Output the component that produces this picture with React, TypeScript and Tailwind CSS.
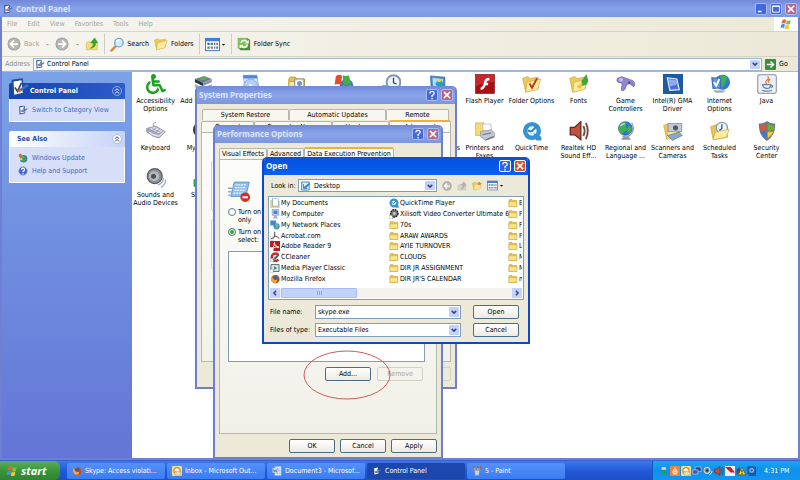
import type { ReactNode } from "react";
import clsx from "clsx";
import { FaWheelchair, FaCaretDown } from "react-icons/fa";

type IconProps = { className?: string };
type DrawnProps = IconProps & { children: ReactNode };

const Svg = ({ className = "size-[20px]", children }: DrawnProps) => (
  <svg viewBox="0 0 32 32" className={clsx("shrink-0", className)} aria-hidden="true">{children}</svg>
);

/* ---------- small icons ---------- */

const PanelIcon = ({ className }: IconProps) => (
  <Svg className={className}>
    <path d="M4 4l17-2 2 24-18 4z" fill="#1c4c9c" />
    <path d="M7 7l12-2 2 19-13 3z" fill="#fff" />
    <path d="M9 16l4 6 6-13" fill="none" stroke="#33415f" strokeWidth="2.5" />
    <path d="M16 21l13-9" stroke="#3b6fc4" strokeWidth="4" />
    <path d="M14 22l4-3" stroke="#e0603a" strokeWidth="4" />
  </Svg>
);

const Flag = ({ className }: IconProps) => (
  <Svg className={className}>
    <path d="M7 5q5-4 9 0l-2 10q-5-3-10 0z" fill="#f0602c" />
    <path d="M18 6q5 3 11-1l-3 11q-5 3-10 0z" fill="#7fc043" />
    <path d="M4 17q5-3 9 0l-2 10q-5-4-10 0z" fill="#4d8af0" />
    <path d="M15 18q5 3 10 0l-2 10q-5 3-10 0z" fill="#fbc52c" />
  </Svg>
);

const Folder = ({ className, children }: IconProps & { children?: ReactNode }) => (
  <Svg className={className}>
    <path d="M3 8l2-3h8l3 3h12v19H3z" fill="#e9c24c" stroke="#b8902c" strokeWidth="1.5" />
    <path d="M3 12h25v15H3z" fill="#fbe48a" stroke="#c9a23a" strokeWidth="1.5" />
    {children}
  </Svg>
);

const OpenFolder = ({ className, children }: IconProps & { children?: ReactNode }) => (
  <Svg className={className}>
    <path d="M1 7l8-3 4 3 13-2v18L6 29z" fill="#edc959" stroke="#c29c37" />
    <path d="M8 13l22-5-5 17L6 29z" fill="#fdeb9b" stroke="#c9a544" />
    {children}
  </Svg>
);

const Circle = ({ back, className }: IconProps & { back?: boolean }) => (
  <Svg className={className}>
    <circle cx="16" cy="16" r="15" fill="#a6a6a2" />
    <circle cx="16" cy="16" r="12" fill="#b9b9b5" />
    <path d={back ? "M25 16H9M16 8l-8 8 8 8" : "M7 16h16M16 8l8 8-8 8"} fill="none" stroke="#fff" strokeWidth="4" />
  </Svg>
);

const UpFolder = ({ className, dim }: IconProps & { dim?: boolean }) => (
  <Svg className={className}>
    <path d="M3 13l8-3 3 3h14v16H3z" fill={dim ? "#d8d6cc" : "#f6dc73"} stroke={dim ? "#aaa" : "#c9a23a"} />
    <path d="M12 26q8-3 7-13h-6l9-11 7 11h-5q1 11-12 13z" fill={dim ? "#b4b4ae" : "#2fa82c"} stroke={dim ? "#999" : "#187a18"} />
  </Svg>
);

const Magnifier = ({ className }: IconProps) => (
  <Svg className={className}>
    <path d="M3 29l10-10" stroke="#d08c4a" strokeWidth="5" strokeLinecap="round" />
    <circle cx="19" cy="12" r="9" fill="#d6edfc" stroke="#7aa6dc" strokeWidth="3" />
    <path d="M14 10q2-5 7-4" stroke="#fff" strokeWidth="3" fill="none" />
  </Svg>
);

const ViewsIcon = ({ className }: IconProps) => (
  <Svg className={className}>
    <rect x="1" y="3" width="30" height="26" fill="#fff" stroke="#3a70c8" strokeWidth="2" />
    <path d="M1 3h30v6H1z" fill="#3f7de0" />
    <path d="M5 12h5v5H5zM19 12h3v5h-3z" fill="#3d64c0" />
    <path d="M12 12h5v5h-5zM5 20h5v5H5z" fill="#3f9460" />
    <path d="M24 12h4v5h-4zM12 20h5v5h-5z" fill="#d8674f" />
    <path d="M19 20h3v5h-3zM24 20h4v5h-4z" fill="#4577cf" />
  </Svg>
);

const SyncIcon = ({ className }: IconProps) => (
  <Svg className={className}>
    <path d="M2 2h22l6 5v23H8l-6-5z" fill="#4c8f38" />
    <path d="M2 2h22v23H2z" fill="#86bd5e" />
    <path d="M9 13a8 8 0 0 1 14-2M24 17a8 8 0 0 1-14 4" fill="none" stroke="#f2faea" strokeWidth="4" />
    <path d="M27 6v9h-9zM6 27v-9h9z" fill="#f2faea" />
  </Svg>
);

const Globe = ({ className }: IconProps) => (
  <Svg className={className}>
    <path d="M8 30h16l-4-5h-8z" fill="#8d93aa" />
    <path d="M25 3q7 11-3 20-6 4-12 1" fill="none" stroke="#9a9fb8" strokeWidth="2" />
    <circle cx="15" cy="12" r="11" fill="#2876d8" stroke="#27549c" />
    <path d="M8 4q6-4 9 0l-2 5 3 4-6 5-2 4q-6-4-6-10zM20 7l5 3q1 6-5 11l-3-6z" fill="#42b04c" />
    <path d="M7 8q3-4 7-4" stroke="#d6f0ff" strokeWidth="2" fill="none" />
  </Svg>
);

const UpdateIcon = ({ className }: IconProps) => (
  <Svg className={className}>
    <circle cx="18" cy="18" r="12" fill="#3772cc" />
    <path d="M12 10l12 2 4 9-8 8-8-4z" fill="#3da44a" />
    <path d="M2 4l8-2 3 8-9 3z" fill="#e85d2c" />
    <path d="M12 8l8 1-1 7-8-1z" fill="#5cb742" />
    <path d="M5 15l8 1 2 8-8-2z" fill="#f5c937" />
  </Svg>
);

const HelpIcon = ({ className }: IconProps) => (
  <Svg className={className}>
    <circle cx="16" cy="16" r="14" fill="#3f66c4" stroke="#a9bce8" strokeWidth="3" />
    <path d="M11 12q0-5 5-5t5 5q0 3-5 5v3M16 23v4" fill="none" stroke="#fff" strokeWidth="4" />
  </Svg>
);

/* ---------- control panel icons ---------- */

const Accessibility = () => <FaWheelchair className="size-[20px] text-[#1fa01f]" />;

const Hardware = () => (
  <Svg>
    <path d="M3 8l15-5 12 5-14 6z" fill="#6e7b8c" />
    <path d="M3 8l13 6v5L3 13z" fill="#2c3547" />
    <path d="M16 14l14-6v5l-14 6z" fill="#8b95a3" />
    <path d="M9 7l9-3 6 3-8 3z" fill="#53b452" />
    <path d="M3 16l13 6 14-6v5l-14 6-13-6z" fill="#a7aebb" />
  </Svg>
);

const Programs = () => (
  <Svg>
    <path d="M5 2h22l3 20H8z" fill="#dcebfb" stroke="#5a8fd6" />
    <path d="M5 2h22l1 5H6z" fill="#4a86dd" />
    <circle cx="17" cy="19" r="11" fill="#b7cff4" stroke="#6f93cb" />
    <circle cx="17" cy="19" r="3" fill="#fff" />
  </Svg>
);

const AdminTools = () => (
  <Folder className="size-[20px]">
    <path d="M12 8h15v14H12z" fill="#d7dff0" stroke="#657597" />
    <circle cx="20" cy="15" r="5" fill="#7b93c5" stroke="#fff" strokeWidth="2" />
  </Folder>
);

const Updates = () => (
  <Svg>
    <circle cx="20" cy="19" r="11" fill="#3a78d0" />
    <path d="M3 3q6-4 10 0l-2 14q-5-2-10 0z" fill="#e44f28" />
    <path d="M14 2q6 2 10 0l3 14q-6 3-12 0z" fill="#48ac3e" />
    <path d="M15 18q5 3 12 0l-2 10H13z" fill="#f6c834" />
  </Svg>
);

const Clock = () => (
  <Svg>
    <path d="M2 18h14v12H2z" fill="#e7694a" />
    <circle cx="20" cy="13" r="11" fill="#e9f3fb" stroke="#8694a5" strokeWidth="3" />
    <path d="M20 6v8l5 2" stroke="#39404d" strokeWidth="2" fill="none" />
  </Svg>
);

const Display = () => (
  <Svg>
    <path d="M4 3l23 2v19L5 22z" fill="#4389c8" stroke="#30628f" />
    <path d="M7 6l17 2v13L8 19z" fill="#a5e1f5" />
    <path d="M12 15l7-9 8 14H14z" fill="#2b9bbb" />
    <circle cx="18" cy="10" r="3" fill="#f5d24c" />
  </Svg>
);

const FlashIcon = () => (
  <Svg>
    <rect x="1" y="1" width="30" height="30" fill="#aa0d12" stroke="#6f090b" />
    <path d="M1 1h30v12Q16 12 1 20z" fill="#c8282b" />
    <path d="M23 8q-6 0-7 7-2 8-7 9M14 16h7" fill="none" stroke="#fff" strokeWidth="4" />
  </Svg>
);

const FolderOptions = () => (
  <OpenFolder><path d="M12 15l4 7 8-15" fill="none" stroke="#b7342a" strokeWidth="3" /></OpenFolder>
);

const Fonts = () => (
  <OpenFolder><path d="M20 11L28 0l3 11-3 6-8 2z" fill="#41a83c" /><path d="M12 20l10-6-4 10z" fill="#f0c030" /></OpenFolder>
);

const Game = () => (
  <Svg>
    <path d="M2 7q7-5 12-1l9 3q8 2 7 9-1 4-4 1l-4-4-5 2q-2 9-6 10-4 0-2-6l1-6-7-2q-3-3-1-6z" fill="#9086c9" stroke="#665aa5" />
    <circle cx="8" cy="9" r="3" fill="#c7c1ea" />
    <circle cx="21" cy="14" r="2" fill="#5146a0" />
  </Svg>
);

const Intel = () => (
  <Svg>
    <rect x="0" y="0" width="32" height="32" fill="#1d5a9f" />
    <path d="M7 6l15 2 4 17-15 1z" fill="#4a70d8" stroke="#e6f0ff" strokeWidth="2" />
    <path d="M9 8l12 2 3 6-13 4z" fill="#8eacf0" />
  </Svg>
);

const Internet = () => (
  <Svg>
    <circle cx="20" cy="13" r="12" fill="#2d79d2" />
    <path d="M15 2q8-2 13 4l-3 8-6 9-4-6 3-6z" fill="#3eae56" />
    <path d="M3 6l13 1 1 15-12 1z" fill="#5f9be4" stroke="#3a6dba" strokeWidth="2" />
    <path d="M6 13l4 6 5-11" fill="none" stroke="#fff" strokeWidth="3" />
    <path d="M5 26h20l-4 4H9z" fill="#a6acbd" />
  </Svg>
);

const Java = () => (
  <Svg>
    <rect x="1" y="1" width="30" height="30" rx="4" fill="#eef0f3" stroke="#9da4b2" strokeWidth="2" />
    <path d="M17 4q3 3-1 6t0 6M21 8q-4 3-2 6" fill="none" stroke="#e3743c" strokeWidth="2" />
    <path d="M9 17h13q0 6-6 6t-7-6zM22 18q5 0 1 4M8 26q8 3 16 0" fill="none" stroke="#5e82a8" strokeWidth="2" />
  </Svg>
);

const Keyboard = () => (
  <Svg>
    <path d="M1 12l14-4 16 9-10 10q-10-1-20-10z" fill="#a9a9bd" stroke="#7b7b92" />
    <path d="M5 12l10-3 12 7-8 4z" fill="#dcdce8" />
    <path d="M6 14l14 6M10 12l13 6M17 10l-7 6M22 13l-6 5" stroke="#8686a0" />
    <path d="M5 18q8 6 16 6l8-7" fill="none" stroke="#e4e4ee" strokeWidth="2" />
    <path d="M13 8q-5-4 3-6" fill="none" stroke="#777" />
  </Svg>
);

const Mouse = () => (
  <Svg>
    <ellipse cx="11" cy="14" rx="11" ry="12" fill="#3a3540" />
    <path d="M4 8q5-5 10-2" stroke="#c87878" strokeWidth="2" fill="none" />
  </Svg>
);

const Printer = () => (
  <Svg>
    <path d="M1 3h13v20H1z" fill="#f6dc70" stroke="#c7a03a" />
    <path d="M12 5h13l2 11H13z" fill="#fff" stroke="#9aa9bb" />
    <path d="M9 17l17-3 5 5v7l-14 5-8-6z" fill="#c5c9d2" stroke="#7d8494" />
    <path d="M12 22l14-3M17 30l13-5" stroke="#6e7686" strokeWidth="2" />
  </Svg>
);

const QuickTime = ({ className }: IconProps) => (
  <Svg className={className}>
    <circle cx="16" cy="16" r="11" fill="#e4f3fc" stroke="#3493d0" strokeWidth="7" />
    <path d="M15 17l8-8M15 17l-6-2" stroke="#2d7bbb" strokeWidth="3" />
    <path d="M18 19l13 6v6h-8z" fill="#3493d0" />
  </Svg>
);

const SpeakerIcon = ({ className }: IconProps) => (
  <Svg className={className}>
    <path d="M2 10h7L19 1v29L9 22H2z" fill="#c4513b" stroke="#63261e" strokeWidth="2" />
    <path d="M23 8q4 8 0 16M27 3q6 13 0 26" fill="none" stroke="#6d4b42" strokeWidth="3" />
  </Svg>
);

const Scanner = () => (
  <OpenFolder>
    <path d="M8 4h22v13H8z" fill="#c1c8d4" stroke="#6a7484" />
    <circle cx="20" cy="11" r="5" fill="#4a5870" stroke="#fff" />
    <path d="M7 23l19-5 5 5-16 8z" fill="#86a8cc" stroke="#54718f" />
  </OpenFolder>
);

const Tasks = () => (
  <Svg>
    <path d="M1 9l9-3 18 3v17L5 30z" fill="#eac552" stroke="#c29c37" />
    <circle cx="19" cy="11" r="9" fill="#e9f3fa" stroke="#849bb0" strokeWidth="2" />
    <path d="M19 5v7l-4 3" stroke="#3e5068" strokeWidth="2" fill="none" />
    <path d="M8 18l23-5-5 13L5 30z" fill="#fdeb9b" stroke="#c9a544" />
  </Svg>
);

const Shield = ({ className }: IconProps) => (
  <Svg className={className}>
    <path d="M16 0q6 5 13 4 1 19-13 28Q2 23 3 4q7 1 13-4z" fill="#6f7787" />
    <path d="M15 4v11H6Q5 10 5 7q6 0 10-3z" fill="#e5532d" />
    <path d="M17 4v11h9q1-5 1-8-6 0-10-3z" fill="#66b13c" />
    <path d="M15 17v11Q8 23 6 17z" fill="#3a76d6" />
    <path d="M17 17v11q7-5 9-11z" fill="#f8c62d" />
  </Svg>
);

const Sounds = () => (
  <Svg>
    <circle cx="14" cy="13" r="12" fill="#8b8f94" stroke="#595d63" strokeWidth="2" />
    <circle cx="13" cy="13" r="8" fill="#b6babf" />
    <circle cx="12" cy="13" r="4" fill="#4e5258" />
    <path d="M19 27q8-2 9-11M24 31q8-5 7-12" stroke="#9da0ce" strokeWidth="2" fill="none" />
  </Svg>
);

const Speech = () => (
  <Svg>
    <circle cx="10" cy="6" r="6" fill="#b4a49c" />
    <path d="M1 18h20v12H1z" fill="#2e9b40" />
  </Svg>
);

const items: { label: string; icon: ReactNode }[] = [
  { label: "Accessibility Options", icon: <Accessibility /> },
  { label: "Add Hardware", icon: <Hardware /> },
  { label: "Add or Remove", icon: <Programs /> },
  { label: "Administrative Tools", icon: <AdminTools /> },
  { label: "Automatic Updates", icon: <Updates /> },
  { label: "Date and Time", icon: <Clock /> },
  { label: "Display", icon: <Display /> },
  { label: "Flash Player", icon: <FlashIcon /> },
  { label: "Folder Options", icon: <FolderOptions /> },
  { label: "Fonts", icon: <Fonts /> },
  { label: "Game Controllers", icon: <Game /> },
  { label: "Intel(R) GMA Driver", icon: <Intel /> },
  { label: "Internet Options", icon: <Internet /> },
  { label: "Java", icon: <Java /> },
  { label: "Keyboard", icon: <Keyboard /> },
  { label: "My Mouse", icon: <Mouse /> },
  { label: "Mouse", icon: <Mouse /> },
  { label: "Network", icon: <Globe /> },
  { label: "Phone", icon: <Printer /> },
  { label: "Portable", icon: <Display /> },
  { label: "Power Options", icon: <Clock /> },
  { label: "Printers and Faxes", icon: <Printer /> },
  { label: "QuickTime", icon: <QuickTime /> },
  { label: "Realtek HD Sound Eff...", icon: <SpeakerIcon /> },
  { label: "Regional and Language ...", icon: <Globe /> },
  { label: "Scanners and Cameras", icon: <Scanner /> },
  { label: "Scheduled Tasks", icon: <Tasks /> },
  { label: "Security Center", icon: <Shield /> },
  { label: "Sounds and Audio Devices", icon: <Sounds /> },
  { label: "Speech", icon: <Speech /> },
];

/* ---------- file list icons ---------- */

const DocIcon = () => (
  <Svg className="size-[10px]">
    <path d="M2 7h10l3 4h15v19H2z" fill="#f3d66b" stroke="#b99336" />
    <path d="M8 1h14l5 5v20H8z" fill="#fff" stroke="#7693b9" strokeWidth="2" />
  </Svg>
);

const ComputerIcon = ({ className = "size-[10px]" }: IconProps) => (
  <Svg className={className}>
    <path d="M7 1h21v19H7z" fill="#cfe4fb" stroke="#6781ae" strokeWidth="2" />
    <path d="M11 5h13v11H11z" fill="#3c87e4" />
    <path d="M12 21h10v4l5 5H7l5-4z" fill="#a7b2c9" />
  </Svg>
);

const NetIcon = () => (
  <Svg className="size-[10px]">
    <path d="M1 2h18v15H1z" fill="#3a83e0" stroke="#8aa5cf" strokeWidth="2" />
    <circle cx="21" cy="20" r="10" fill="#3f8bd8" />
    <path d="M17 13l8-1 3 8-7 8-4-5z" fill="#62bd73" />
  </Svg>
);

const AcrobatIcon = () => (
  <Svg className="size-[10px]">
    <path d="M0 16h10v14H0z" fill="#fff" stroke="#888" />
    <path d="M15 2v14q0 7-12 9M15 16q8 1 15 8" fill="none" stroke="#444" strokeWidth="3" />
  </Svg>
);

const ReaderIcon = () => (
  <Svg className="size-[10px]">
    <rect width="32" height="32" fill="#b81c1c" />
    <path d="M14 4q2 10-7 20M14 8q5 12 15 12-10-3-20 3" fill="none" stroke="#fff" strokeWidth="3" />
    <path d="M0 20h11v12H0z" fill="#fff" />
  </Svg>
);

const CleanerIcon = () => (
  <Svg className="size-[10px]">
    <path d="M27 9A12 12 0 1 0 27 24" fill="none" stroke="#c32d26" strokeWidth="8" />
    <path d="M12 20l14-14 4 4-13 15z" fill="#54586b" />
    <path d="M0 20h11v12H0z" fill="#e6eaf0" stroke="#555" />
  </Svg>
);

const MediaIcon = () => (
  <Svg className="size-[10px]">
    <path d="M3 5h26v22H3z" fill="#d7e4e4" stroke="#55676a" strokeWidth="3" />
    <path d="M13 10l10 6-10 6z" fill="#3f7e60" />
    <path d="M0 20h10v12H0z" fill="#fff" stroke="#555" />
  </Svg>
);

const Firefox = ({ className = "size-[10px]" }: IconProps) => (
  <Svg className={className}>
    <circle cx="17" cy="16" r="14" fill="#e2701f" />
    <circle cx="17" cy="13" r="8" fill="#3f61ac" />
    <path d="M3 8q6 3 8 9 7 5 14-1-3 12-13 11Q2 24 3 8z" fill="#f7a832" />
    <path d="M20 3q11 6 9 17-3 8-9 10 6-12 0-27z" fill="#c8421c" />
  </Svg>
);

const Reel = () => (
  <Svg className="size-[10px]">
    <circle cx="17" cy="14" r="12" fill="#777" stroke="#222" strokeWidth="4" strokeDasharray="6 2" />
    <circle cx="17" cy="14" r="4" fill="#ddd" />
    <path d="M0 20h11v12H0z" fill="#fff" stroke="#333" />
  </Svg>
);

const small = <Folder className="size-[10px]" />;

const files: { name: string; icon: ReactNode }[] = [
  { name: "My Documents", icon: <DocIcon /> },
  { name: "My Computer", icon: <ComputerIcon /> },
  { name: "My Network Places", icon: <NetIcon /> },
  { name: "Acrobat.com", icon: <AcrobatIcon /> },
  { name: "Adobe Reader 9", icon: <ReaderIcon /> },
  { name: "CCleaner", icon: <CleanerIcon /> },
  { name: "Media Player Classic", icon: <MediaIcon /> },
  { name: "Mozilla Firefox", icon: <Firefox /> },
  { name: "QuickTime Player", icon: <QuickTime className="size-[10px]" /> },
  { name: "Xilisoft Video Converter Ultimate 6", icon: <Reel /> },
  { name: "70s", icon: small },
  { name: "ARAW AWARDS", icon: small },
  { name: "AYIE TURNOVER", icon: small },
  { name: "CLOUDS", icon: small },
  { name: "DIR JR ASSIGNMENT", icon: small },
  { name: "DIR JR'S CALENDAR", icon: small },
  { name: "E", icon: small },
  { name: "F", icon: small },
  { name: "F", icon: small },
  { name: "F", icon: small },
  { name: "L", icon: small },
  { name: "M", icon: small },
  { name: "M", icon: small },
  { name: "m", icon: small },
];

/* ---------- shared controls ---------- */

const Chevron = ({ className = "size-[6px]", d = "M4 10l12 12 12-12" }: IconProps & { d?: string }) => (
  <Svg className={className}><path d={d} fill="none" stroke="#33497c" strokeWidth="8" /></Svg>
);

const CaptionButton = ({ kind, active }: { kind: "min" | "max" | "help" | "close"; active?: boolean }) => (
  <button
    aria-label={kind}
    className={clsx(
      "flex size-[12px] items-center justify-center rounded-[2px] border",
      active ? "border-white" : "border-[#a9bbf0]",
      kind === "close" ? (active ? "bg-[#dc5030]" : "bg-[#b5668a]") : active ? "bg-[#2f64e4]" : "bg-[#4268dd]",
    )}
  >
    <Svg className="size-[10px]">
      {kind === "min" && <path d="M6 24h12" stroke="#fff" strokeWidth="5" />}
      {kind === "max" && <path d="M5 6h22v20H5zM5 8h22" fill="none" stroke="#fff" strokeWidth="3" />}
      {kind === "help" && <path d="M9 11q0-7 7-7t7 6q0 4-7 8v4M16 25v5" fill="none" stroke="#fff" strokeWidth="4" />}
      {kind === "close" && <path d="M6 6l20 20M26 6L6 26" stroke="#fff" strokeWidth="5" />}
    </Svg>
  </button>
);

type WindowProps = { title: string; className: string; active?: boolean; children: ReactNode };

const Dialog = ({ title, className, active, children }: WindowProps) => (
  <section
    className={clsx(
      "absolute flex flex-col overflow-hidden rounded-t-[5px] border-2 border-t-0 bg-[#ece9d8]",
      active ? "border-[#0a48cf]" : "border-[#6f7fd0]",
      className,
    )}
  >
    <header
      className={clsx(
        "-mx-[2px] flex h-[18px] shrink-0 items-center gap-[3px] px-[4px]",
        active
          ? "bg-linear-to-b from-[#0a50d8] via-[#0458e8] to-[#0660f8] text-white"
          : "bg-linear-to-b from-[#7288d8] via-[#8aa5ea] to-[#7c95e0] text-[#dce4fa]",
      )}
    >
      <h2 className="flex-1 font-['Open_Sans',sans-serif] text-[8px] font-bold">{title}</h2>
      <CaptionButton kind="help" active={active} />
      <CaptionButton kind="close" active={active} />
    </header>
    {children}
  </section>
);

const PushButton = ({ children, disabled }: { children: ReactNode; disabled?: boolean }) => (
  <button
    disabled={disabled}
    className="flex h-[14px] w-[46px] items-center justify-center rounded-[2px] border border-[#4a6c88] bg-linear-to-b from-white to-[#edeae0] disabled:border-[#d3d1c2] disabled:bg-none disabled:text-[#aca899]"
  >
    {children}
  </button>
);

const Arrow = () => (
  <span className="pointer-events-none absolute top-px right-px bottom-px flex w-[10px] items-center justify-center rounded-[1px] bg-[#c3d2fa]">
    <Chevron />
  </span>
);

const Tab = ({ children, selected, className }: { children: ReactNode; selected?: boolean; className: string }) => (
  <button
    role="tab"
    aria-selected={selected}
    className={clsx(
      "flex items-center justify-center rounded-t-[2px] border border-b-0 whitespace-nowrap",
      selected ? "h-[12px] border-[#b3b3a6] border-t-2 border-t-[#f0b040] bg-[#fcfcfa]" : "h-[11px] border-[#b5b8ac] bg-[#f7f6f1]",
      className,
    )}
  >
    {children}
  </button>
);

/* ---------- control panel window ---------- */

const TaskBox = ({ title, dark, children }: { title: string; dark?: boolean; children: ReactNode }) => (
  <section>
    <header
      className={clsx(
        "flex h-[16px] items-center rounded-t-[2px] pr-[3px] pl-[8px]",
        dark ? "bg-linear-to-r from-[#1244b0] to-[#2c5cca] text-white" : "bg-linear-to-r from-white to-[#c6d3f7] text-[#1f4cab]",
      )}
    >
      {dark && <PanelIcon className="-mt-[8px] -ml-[8px] size-[21px]" />}
      <h3 className="flex-1 font-bold">{title}</h3>
      <button aria-label="Collapse" className={clsx("flex size-[10px] items-center justify-center rounded-full border", dark ? "border-[#8ba6e4]" : "border-[#aebbe0] bg-white")}>
        <Svg className="size-[8px]">
          <path d="M8 15l8-8 8 8M8 26l8-8 8 8" fill="none" stroke={dark ? "#fff" : "#26428b"} strokeWidth="4" />
        </Svg>
      </button>
    </header>
    <div className="flex flex-col gap-[3px] border border-t-0 border-white bg-[#d6dff7] px-[8px] py-[6px] text-[#3b6ac4]">{children}</div>
  </section>
);

const TaskLink = ({ icon, children }: { icon: ReactNode; children: ReactNode }) => (
  <a href="#" className="flex h-[10px] items-center gap-[4px] whitespace-nowrap">{icon}{children}</a>
);

const Divider = () => <span className="h-[20px] w-px bg-[#d0cdbc]" />;

const ControlPanel = () => (
  <main className="flex min-h-0 flex-1 flex-col border-x-2 border-b-2 border-[#6f7fd4] bg-[#ece9d8]">
    <header className="-mx-[2px] flex h-[17px] shrink-0 items-center gap-[3px] bg-linear-to-b from-[#7288d8] via-[#86a2ea] to-[#7c98e2] px-[3px] text-[#dce4fa]">
      <PanelIcon className="size-[10px]" />
      <h1 className="flex-1 font-['Open_Sans',sans-serif] text-[8px] font-bold">Control Panel</h1>
      <CaptionButton kind="min" />
      <CaptionButton kind="max" />
      <CaptionButton kind="close" />
    </header>
    <nav className="flex h-[15px] shrink-0 items-center gap-[10px] border-b border-[#d8d4c4] bg-linear-to-r from-[#f5f4ef] to-[#ece9d8] pl-[5px] text-[#a5a396]">
      {["File", "Edit", "View", "Favorites", "Tools", "Help"].map((m) => <button key={m}>{m}</button>)}
      <span className="ml-auto flex h-[14px] w-[24px] items-center justify-center bg-white"><Flag className="size-[12px]" /></span>
    </nav>
    <div className="flex h-[25px] shrink-0 items-center gap-[5px] border-b border-[#d8d4c4] bg-linear-to-r from-[#f5f4ef] to-[#ece9d8] pl-[5px]">
      <button className="flex items-center gap-[3px] text-[#a5a396]"><Circle back className="size-[14px]" />Back<FaCaretDown className="ml-[3px] size-[5px]" /></button>
      <button aria-label="Forward" className="flex items-center gap-[6px] text-[#a5a396]"><Circle className="size-[14px]" /><FaCaretDown className="size-[5px]" /></button>
      <button aria-label="Up"><UpFolder className="size-[14px]" /></button>
      <Divider />
      <button className="flex items-center gap-[2px]"><Magnifier className="size-[15px]" />Search</button>
      <button className="flex items-center gap-[3px]"><OpenFolder className="size-[14px]" />Folders</button>
      <Divider />
      <button aria-label="Views" className="flex items-center gap-px"><ViewsIcon className="size-[15px]" /><FaCaretDown className="size-[5px]" /></button>
      <Divider />
      <button className="flex items-center gap-[3px]"><SyncIcon className="size-[14px]" />Folder Sync</button>
    </div>
    <div className="flex h-[14px] shrink-0 items-center gap-[3px] bg-linear-to-r from-[#f5f4ef] to-[#ece9d8] pl-[3px]">
      <label htmlFor="address" className="text-[#8e8c80]">Address</label>
      <div className="relative flex h-[13px] flex-1 items-center gap-[2px] border border-[#9db3cf] bg-white pl-px">
        <PanelIcon className="size-[10px]" />
        <input id="address" defaultValue="Control Panel" className="min-w-0 flex-1" />
        <Arrow />
      </div>
      <button className="flex w-[33px] items-center gap-[3px]">
        <Svg className="size-[11px]"><rect width="32" height="32" rx="3" fill="#329238" /><path d="M5 16h20M16 7l9 9-9 9" fill="none" stroke="#fff" strokeWidth="4" /></Svg>
        Go
      </button>
    </div>
    <div className="flex min-h-0 flex-1 border-t border-[#aab7d4] bg-white">
      <aside className="flex w-[130px] shrink-0 flex-col gap-[9px] bg-linear-to-b from-[#7ba2e7] to-[#6375d6] px-[7px] pt-[11px]">
        <TaskBox title="Control Panel" dark>
          <TaskLink icon={<PanelIcon className="size-[10px]" />}>Switch to Category View</TaskLink>
        </TaskBox>
        <TaskBox title="See Also">
          <TaskLink icon={<UpdateIcon className="size-[10px]" />}>Windows Update</TaskLink>
          <TaskLink icon={<HelpIcon className="size-[10px]" />}>Help and Support</TaskLink>
        </TaskBox>
      </aside>
      <ul className="grid flex-1 auto-rows-[47px] grid-cols-[repeat(auto-fill,47px)] content-start pt-[2px]">
        {items.map((item) => (
          <li key={item.label} className="flex flex-col items-center gap-[3px] text-center leading-[8px]">
            {item.icon}
            <span>{item.label}</span>
          </li>
        ))}
      </ul>
    </div>
  </main>
);

/* ---------- dialogs ---------- */

const SystemProperties = () => (
  <Dialog title="System Properties" className="top-[86px] left-[195px] h-[303px] w-[262px]">
    <div className="flex flex-1 flex-col px-[4px] pt-[5px] pb-[6px]">
      <div role="tablist" className="flex px-px">
        <Tab className="w-[87px]">System Restore</Tab>
        <Tab className="w-[97px]">Automatic Updates</Tab>
        <Tab className="w-[63px]">Remote</Tab>
      </div>
      <div role="tablist" className="flex items-end">
        <Tab className="w-[53px]">General</Tab>
        <Tab className="w-[78px]">Computer Name</Tab>
        <Tab className="w-[57px]">Hardware</Tab>
        <Tab className="w-[62px]" selected>Advanced</Tab>
      </div>
      <div className="flex flex-1 flex-col gap-[8px] border border-[#b5b8ac] bg-linear-to-b from-[#fcfcfa] to-[#f3f2ea] px-[9px] pt-[28px] pb-[8px]">
        <div className="h-[50px] rounded-[2px] border border-[#d3d3c8]" />
        <div className="h-[50px] rounded-[2px] border border-[#d3d3c8]" />
      </div>
      <div className="mt-[5px] flex justify-end gap-[4px]">
        <PushButton>OK</PushButton>
        <PushButton>Cancel</PushButton>
        <PushButton disabled>Apply</PushButton>
      </div>
    </div>
  </Dialog>
);

const PerformanceOptions = () => (
  <Dialog title="Performance Options" className="top-[125px] left-[213px] h-[334px] w-[230px]">
    <div className="flex flex-1 flex-col px-[4px] py-[4px]">
      <div role="tablist" className="flex items-end">
        <Tab className="w-[48px]">Visual Effects</Tab>
        <Tab className="w-[37px]">Advanced</Tab>
        <Tab className="w-[90px]" selected>Data Execution Prevention</Tab>
      </div>
      <div className="flex flex-1 flex-col border border-[#b5b8ac] bg-linear-to-b from-[#fcfcfa] to-[#f1f0e8] px-[8px] pt-[20px]">
        <Svg className="size-[22px]">
          <path d="M9 3h22l-5 21H4z" fill="#8fbdea" stroke="#4b86c4" />
          <path d="M11 7h16M10 11h16M9 15h16M8 19h16" stroke="#e8f4ff" strokeWidth="2" strokeDasharray="3 1" />
          <path d="M0 12h6M0 17h5M0 22h4" stroke="#8aa9cc" strokeWidth="2" />
          <circle cx="25" cy="25" r="7" fill="#d62c20" />
          <path d="M21 25h8" stroke="#fff" strokeWidth="3" />
        </Svg>
        <div className="mt-[6px] flex flex-col gap-[4px] leading-[8px] whitespace-nowrap">
          <label className="flex items-start gap-[2px]">
            <input type="radio" name="dep" className="size-[8px] shrink-0 appearance-none rounded-full border border-[#5b7d9c] bg-white" />
            <span>Turn on DEP for essential Windows programs and services<br />only</span>
          </label>
          <label className="flex items-start gap-[2px]">
            <input type="radio" name="dep" defaultChecked className="size-[8px] shrink-0 appearance-none rounded-full border border-[#5b7d9c] bg-[#2fa82c] inset-ring-1 inset-ring-white" />
            <span>Turn on DEP for all programs and services except those I<br />select:</span>
          </label>
        </div>
        <div className="mt-[7px] mr-[3px] h-[111px] border border-[#7f9db9] bg-white" />
        <div className="mt-[5px] flex justify-end gap-[6px] pr-[5px]">
          <PushButton>Add...</PushButton>
          <PushButton disabled>Remove</PushButton>
        </div>
      </div>
      <div className="mt-[5px] flex justify-end gap-[5px]">
        <PushButton>OK</PushButton>
        <PushButton>Cancel</PushButton>
        <PushButton>Apply</PushButton>
      </div>
    </div>
  </Dialog>
);

const OpenDialog = () => (
  <Dialog title="Open" active className="top-[157px] left-[262px] h-[187px] w-[268px]">
    <div className="flex flex-1 flex-col px-[4px] pt-[4px]">
      <div className="flex items-center gap-[5px] pl-[3px]">
        <label htmlFor="look-in" className="w-[22px] whitespace-nowrap">Look in:</label>
        <div className="relative flex h-[13px] w-[139px] items-center border border-[#7f9db9] bg-white pl-[2px]">
          <Svg className="size-[10px]">
            <path d="M2 3h24v26H2z" fill="#d4ecfa" stroke="#3f86b8" strokeWidth="3" />
            <path d="M8 20L26 6l3 4-15 14z" fill="#3a7ebd" />
            <path d="M8 10v14h12" fill="none" stroke="#3f86b8" strokeWidth="3" />
          </Svg>
          <select id="look-in" className="min-w-0 flex-1 appearance-none pl-[3px]"><option>Desktop</option></select>
          <Arrow />
        </div>
        <button aria-label="Back"><Circle back className="size-[10px]" /></button>
        <button aria-label="Up"><UpFolder dim className="size-[10px]" /></button>
        <button aria-label="New folder"><OpenFolder className="size-[10px]"><path d="M24 1l2 5 5 1-4 3 1 5-4-3-5 2 2-5-3-4h5z" fill="#ee7a30" /></OpenFolder></button>
        <button aria-label="Views" className="flex items-center gap-px"><ViewsIcon className="size-[11px]" /><FaCaretDown className="size-[5px]" /></button>
      </div>
      <div className="mt-[4px] flex h-[104px] flex-col border border-[#7f9db9] bg-white p-px">
        <ul className="grid h-[86px] grid-flow-col auto-cols-[119px] grid-rows-8 overflow-hidden">
          {files.map((f, i) => (
            <li key={i} className="flex items-center gap-px whitespace-nowrap">{f.icon}{f.name}</li>
          ))}
        </ul>
        <div className="mt-auto flex h-[10px] bg-[#f4f3ee]">
          <button aria-label="Scroll left" className="flex w-[10px] items-center justify-center rounded-[1px] bg-[#c3d2fa]"><Chevron d="M22 4L10 16l12 12" /></button>
          <div className="flex-1 px-px">
            <div className="flex h-[10px] w-[76px] items-center justify-center gap-px rounded-[1px] border border-[#a8bcf0] bg-[#c3d2fa]">
              <span className="h-[4px] w-px bg-[#8fa6e0]" /><span className="h-[4px] w-px bg-[#8fa6e0]" /><span className="h-[4px] w-px bg-[#8fa6e0]" />
            </div>
          </div>
          <button aria-label="Scroll right" className="flex w-[10px] items-center justify-center rounded-[1px] bg-[#c3d2fa]"><Chevron d="M10 4l12 12-12 12" /></button>
        </div>
      </div>
      <div className="mt-[5px] grid grid-cols-[45px_146px_1fr] items-center gap-y-[4px] pl-[2px]">
        <label htmlFor="file-name">File name:</label>
        <div className="relative h-[14px] border border-[#7f9db9] bg-white">
          <input id="file-name" defaultValue="skype.exe" className="block h-full w-full pl-[2px]" />
          <Arrow />
        </div>
        <div className="pl-[12px]"><PushButton>Open</PushButton></div>
        <label htmlFor="file-type">Files of type:</label>
        <div className="relative h-[14px] border border-[#7f9db9] bg-white">
          <select id="file-type" className="block h-full w-full appearance-none pl-[2px]"><option>Executable Files</option></select>
          <Arrow />
        </div>
        <div className="pl-[12px]"><PushButton>Cancel</PushButton></div>
      </div>
    </div>
  </Dialog>
);

/* ---------- task bar ---------- */

const MailIcon = ({ className = "size-[10px]" }: IconProps) => (
  <Svg className={className}>
    <rect width="32" height="32" rx="4" fill="#f6dfa0" />
    <circle cx="16" cy="15" r="10" fill="#fff" stroke="#d18b24" strokeWidth="4" />
    <path d="M8 17h20v12H10z" fill="#fff7d8" stroke="#c18a30" strokeWidth="2" />
    <path d="M9 18l9 6 9-6" fill="none" stroke="#c18a30" strokeWidth="2" />
  </Svg>
);

const WordIcon = () => (
  <Svg className="size-[10px]">
    <path d="M9 2h20v28H9z" fill="#fff" stroke="#9cb6e4" strokeWidth="2" />
    <path d="M19 9h8M19 14h8M19 19h8M13 25h14" stroke="#6d8dcb" strokeWidth="2" />
    <path d="M1 6h17v16H1z" fill="#dce9fb" stroke="#3a62b0" />
    <path d="M4 10l3 9 3-7 3 7 3-9" fill="none" stroke="#2b55a8" strokeWidth="2" />
  </Svg>
);

const PaintIcon = () => (
  <Svg className="size-[10px]">
    <path d="M8 14h16l-2 16H10z" fill="#c7d3e4" stroke="#67809f" />
    <path d="M11 15L6 3M17 15l1-13M20 15l7-11" stroke="#e7a13a" strokeWidth="4" />
    <path d="M7 6L5 1M18 6V0M25 8l3-6" stroke="#c9402c" strokeWidth="4" />
  </Svg>
);

const tasks = [
  { label: "Skype: Access violati...", icon: <Firefox /> },
  { label: "Inbox - Microsoft Out...", icon: <MailIcon /> },
  { label: "Document3 - Microsof...", icon: <WordIcon /> },
  { label: "Control Panel", icon: <PanelIcon className="size-[10px]" />, active: true },
  { label: "5 - Paint", icon: <PaintIcon /> },
];

const Tray = () => (
  <div className="flex h-full w-[148px] items-center gap-px border-l border-[#0d59b8] bg-linear-to-b from-[#1ba4f4] via-[#0f8fec] to-[#1496f0] pl-[6px] text-white">
    <Svg className="size-[10px]"><path d="M8 4h14v8H8z" fill="#ddd" /><path d="M3 12l14 2 10 12-9 3z" fill="#2b9b45" /></Svg>
    <Svg className="size-[10px]"><rect width="32" height="32" rx="3" fill="#e8863c" /><path d="M16 5v12M11 11v6M21 11v6M7 19h18M9 25h14" stroke="#fff" strokeWidth="3" /></Svg>
    <MailIcon />
    <Svg className="size-[10px]"><path d="M10 3h19v15H10z" fill="#28417f" stroke="#cdd9f0" strokeWidth="2" /><path d="M2 12h17v14H2z" fill="#3d5fae" stroke="#cdd9f0" strokeWidth="2" /></Svg>
    <Svg className="size-[10px]"><circle cx="13" cy="14" r="10" fill="#8b8f94" stroke="#dde" strokeWidth="3" /><circle cx="13" cy="14" r="4" fill="#333" /><path d="M20 28q8-3 9-12" fill="none" stroke="#dde" strokeWidth="3" /></Svg>
    <SpeakerIcon className="size-[10px]" />
    <Svg className="size-[10px]"><rect width="32" height="32" fill="#f3f3f3" /><path d="M0 3h18l14 18H18z" fill="#c51f2c" /></Svg>
    <Svg className="size-[10px]"><path d="M2 26V12l8-7 6 8v13z" fill="#3d5060" /><path d="M19 4l12 24H7z" fill="#f6d631" stroke="#5b5416" strokeWidth="2" /><path d="M19 12v8M19 22v4" stroke="#222" strokeWidth="3" /></Svg>
    <Svg className="size-[10px]"><path d="M3 3h24v22H3z" fill="#2d6bbf" stroke="#164585" strokeWidth="3" /><circle cx="15" cy="14" r="6" fill="none" stroke="#acd1fa" strokeWidth="3" /><path d="M6 29h22" stroke="#164585" strokeWidth="4" /></Svg>
    <time className="ml-[6px]">4:31 PM</time>
  </div>
);

const Taskbar = () => (
  <footer className="flex h-[20px] shrink-0 items-center border-t border-[#3a62cc] bg-linear-to-b from-[#3c78ee] via-[#2259d8] to-[#1e4fc4]">
    <button className="mr-[7px] flex h-full w-[60px] items-center gap-[3px] rounded-r-[6px] bg-linear-to-b from-[#5cae5c] via-[#3b953b] to-[#2f832f] pl-[6px] font-['Open_Sans',sans-serif] text-[11px] font-bold text-white italic">
      <Flag className="size-[12px]" />start
    </button>
    <div className="flex min-w-0 flex-1 gap-[2px]">
      {tasks.map((t) => (
        <button
          key={t.label}
          className={clsx(
            "flex h-[16px] w-[98px] items-center gap-[3px] rounded-[2px] pl-[5px] whitespace-nowrap text-white",
            t.active ? "bg-[#1c48ae]" : "bg-linear-to-b from-[#5590fa] to-[#3b7cf2]",
          )}
        >
          {t.icon}{t.label}
        </button>
      ))}
    </div>
    <Tray />
  </footer>
);

export default function App() {
  return (
    <div className="relative flex h-screen flex-col overflow-hidden font-['DejaVu_Sans_Condensed','DejaVu_Sans',sans-serif] text-[7px] leading-[10px] text-black">
      <ControlPanel />
      <Taskbar />
      <SystemProperties />
      <PerformanceOptions />
      <svg viewBox="0 0 88 50" className="pointer-events-none absolute top-[350px] left-[303px] h-[50px] w-[88px]" aria-hidden="true">
        <ellipse cx="44" cy="25" rx="43" ry="24" fill="none" stroke="#cf5a5a" />
      </svg>
      <OpenDialog />
    </div>
  );
}
